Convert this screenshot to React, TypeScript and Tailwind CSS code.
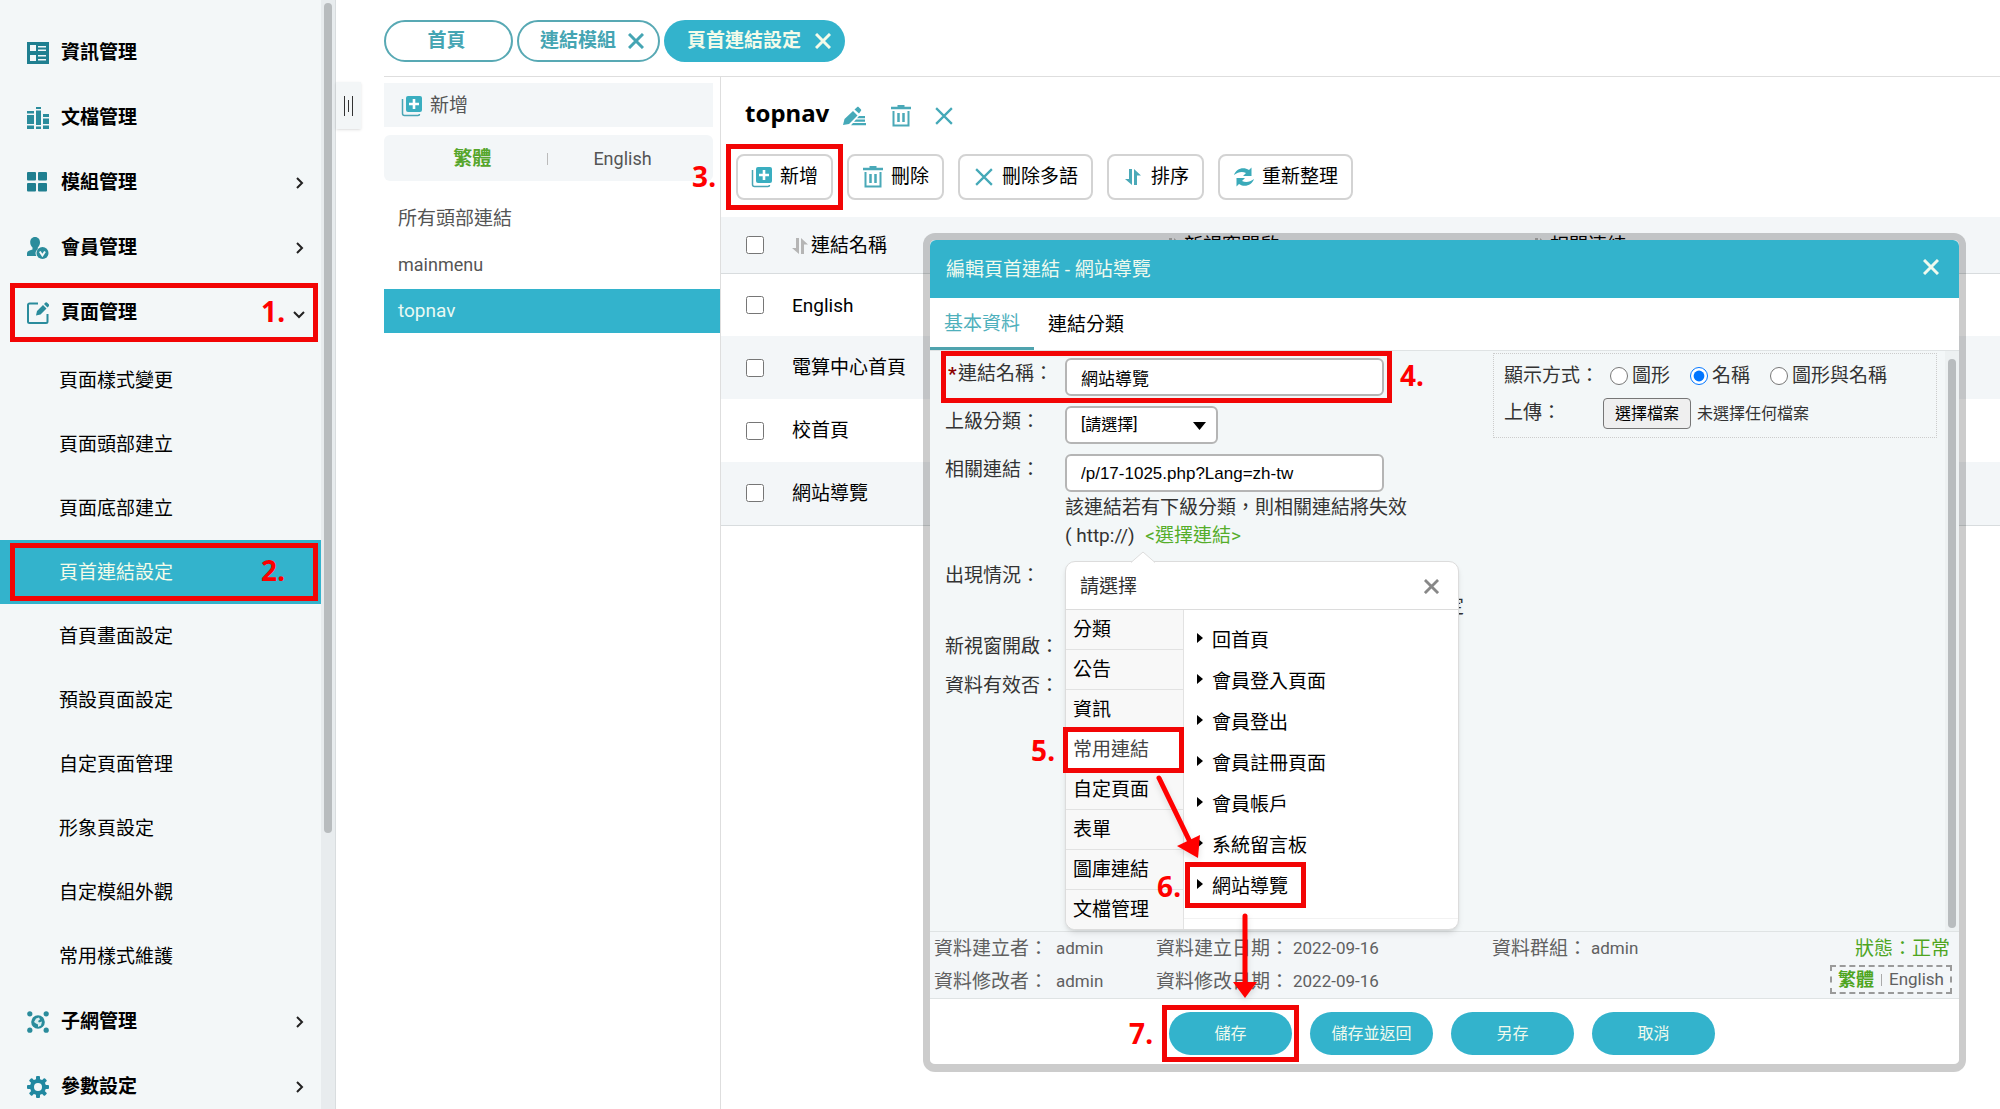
import { useRef } from "react";
import type { ReactNode } from "react";

const subItems = [
  "頁面樣式變更",
  "頁面頭部建立",
  "頁面底部建立",
  "頁首連結設定",
  "首頁畫面設定",
  "預設頁面設定",
  "自定頁面管理",
  "形象頁設定",
  "自定模組外觀",
  "常用樣式維護",
];

const rows = ["English", "電算中心首頁", "校首頁", "網站導覽"];

const linkGroups = ["分類", "公告", "資訊", "常用連結", "自定頁面", "表單", "圖庫連結", "文檔管理"];

const commonLinks = ["回首頁", "會員登入頁面", "會員登出", "會員註冊頁面", "會員帳戶", "系統留言板", "網站導覽"];

/* ---------- icons ---------- */

function InfoIcon() {
  return (
    <svg width="22" height="22" viewBox="0 0 22 22" fill="#1f7f90">
      <path fillRule="evenodd" d="M0 0h22v22H0zM3 3v6h6V3zM3 13v6h6v-6zM11 4v1.5h8V4zM11 7.5V9h8V7.5zM11 13v1.5h8V13zM11 17v1.5h8V17z" />
    </svg>
  );
}

function BooksIcon() {
  return (
    <svg width="22" height="22" viewBox="0 0 22 22" fill="#2a8c9c">
      <path d="M0 4h7v2.5H0zM0 8h7v9H0zM0 18.5h7V22H0zM9 0h5v2H9zM9 3.5h5V18H9zM9 19.5h5V22H9zM16 7h6v3h-6zM16 11.5h6V17h-6zM16 18.5h6V22h-6z" />
    </svg>
  );
}

function GridIcon() {
  return (
    <svg width="22" height="22" viewBox="0 0 22 22" fill="#1f7f90">
      <rect x="0" y="0" width="9" height="8.5" rx="1" />
      <rect x="11" y="0" width="9" height="8.5" rx="1" />
      <rect x="0" y="11" width="9" height="8.5" rx="1" />
      <rect x="11" y="11" width="9" height="8.5" rx="1" />
    </svg>
  );
}

function MemberIcon() {
  return (
    <svg width="22" height="22" viewBox="0 0 22 22" fill="#2a8c9c">
      <path d="M8 0c3.200 0 5 2.300 5 5.200 0 2.300-1 4.200-2.200 5.200v1.800C9 13.500 8.300 15 8.600 17c.1.800.4 1.500.8 2H0v-2.500c0-1.500 1-2.300 2.500-2.900l3-1.200v-2C4.200 9.300 3.200 7.500 3.200 5.200 3.200 2.300 4.900 0 8 0z" />
      <circle cx="15.500" cy="16" r="6" />
      <path d="M12.800 14.500l2.600 4 2.600-4" fill="none" stroke="#f3f7f8" strokeWidth="2" />
    </svg>
  );
}

function PageIcon() {
  return (
    <svg width="22" height="22" viewBox="0 0 22 22" fill="#2a8c9c">
      <path d="M11 1.500H2.500a1.500 1.500 0 0 0-1.500 1.500v16.500a1.500 1.500 0 0 0 1.500 1.500H19a1.500 1.500 0 0 0 1.500-1.500V12" fill="none" stroke="#2a8c9c" strokeWidth="2" />
      <path d="M9 13.500l1-4.500 6-6 3.500 3.500-6 6zM17 2l1.500-1.500a1 1 0 0 1 1.400 0L22 2.600a1 1 0 0 1 0 1.400l-1.500 1.500z" />
    </svg>
  );
}

function SubnetIcon() {
  return (
    <svg width="22" height="22" viewBox="0 0 22 22" fill="#2a8c9c">
      <circle cx="2.800" cy="2.800" r="2.600" />
      <circle cx="19.200" cy="2.800" r="2.600" />
      <circle cx="2.800" cy="19.200" r="2.600" />
      <circle cx="19.200" cy="19.200" r="2.600" />
      <circle cx="11" cy="11" r="6.800" />
      <path d="M7 11l2-3.500 3-1 1 2-2 1.500 1 1.500 3-1-1 4-3 1.500v-2.500l-2-1z" fill="#d9eef0" />
    </svg>
  );
}

function GearIcon() {
  return (
    <svg width="22" height="22" viewBox="0 0 22 22">
      <g fill="#2188a0">
        <rect x="9" y="0" width="4" height="22" rx="1" />
        <rect x="9" y="0" width="4" height="22" rx="1" transform="rotate(45 11 11)" />
        <rect x="9" y="0" width="4" height="22" rx="1" transform="rotate(90 11 11)" />
        <rect x="9" y="0" width="4" height="22" rx="1" transform="rotate(135 11 11)" />
        <circle cx="11" cy="11" r="8" />
      </g>
      <circle cx="11" cy="11" r="4" fill="#f3f7f8" />
    </svg>
  );
}

function Chevron({ down = false }: { down?: boolean }) {
  return (
    <svg width="12" height="12" viewBox="0 0 12 12" fill="none" stroke="#222" strokeWidth="2">
      {down ? <path d="M1 5l5 5 5-5" /> : <path d="M4 1l5 5-5 5" />}
    </svg>
  );
}

function CrossIcon({ size = 16, width = 3 }: { size?: number; width?: number }) {
  return (
    <svg width={size} height={size} viewBox="0 0 16 16" fill="none" stroke="currentColor" strokeWidth={width}>
      <path d="M1 1l14 14M15 1L1 15" />
    </svg>
  );
}

function AddIcon() {
  return (
    <svg width="22" height="22" viewBox="0 0 22 22">
      <rect x="5" y="1" width="16" height="16" rx="2" fill="#3aaec0" />
      <path d="M13 4v10M8 9h10" stroke="#fff" strokeWidth="2.600" />
      <path d="M1.500 4v14.500a2 2 0 0 0 2 2H17c1 0 1.500-.5 1.500-1.500" fill="none" stroke="#4aa5b5" strokeWidth="1.500" />
    </svg>
  );
}

function TrashIcon() {
  return (
    <svg width="20" height="22" viewBox="0 0 20 22" fill="none" stroke="#4aa9b8">
      <path d="M0 3h20" strokeWidth="2.500" />
      <path d="M6.500 1h7" strokeWidth="2" />
      <path d="M2.500 6v14.500h15V6" strokeWidth="2" />
      <path d="M7.500 8v9M12.500 8v9" strokeWidth="2.500" />
    </svg>
  );
}

function PencilIcon() {
  return (
    <svg width="24" height="20" viewBox="0 0 24 20" fill="#45a9b8">
      <path d="M0 19l1.500-6L10 5l4.500 4.500L6 18zM11.500 3.500L14 1.200c.6-.6 1.200-.6 1.800 0l2 2c.6.600.6 1.200 0 1.800L16 7.500z" />
      <path d="M16 10h6v2.200h-8zM13 13.500h9v2.200H11zM10 17h13v2.200H8z" />
    </svg>
  );
}

function SortIcon({ color = "#4aa9b8" }: { color?: string }) {
  return (
    <svg width="16" height="18" viewBox="0 0 16 18" fill={color}>
      <path d="M4 1h3v16L0 11h4zM9 17V1l7 6.500h-4V17z" />
    </svg>
  );
}

function RefreshIcon() {
  return (
    <svg width="22" height="20" viewBox="0 0 22 20" fill="#3aaab9">
      <path d="M1 8C3 2 10-1 16 3l2.500-2.500V9H10l3-3C9 4 5 5 1 8z" />
      <path d="M21 12c-2 6-9 9-15 5l-2.500 2.500V11H12l-3 3c4 2 8 1 12-2z" />
    </svg>
  );
}

/* ---------- numbered steps ---------- */

function StepBox({ className }: { className: string }) {
  return <span className={`pointer-events-none absolute z-10 border-[5px] border-[#f20505] ${className}`} />;
}

function StepNumber({ n, className }: { n: number; className: string }) {
  return (
    <span className={`pointer-events-none absolute z-10 font-['Noto_Sans',sans-serif] text-[28px] leading-7 font-bold text-[#ff0000] ${className}`}>
      {n}.
    </span>
  );
}

/* ---------- sidebar ---------- */

function MenuItem({ icon, label, arrow, children }: { icon: ReactNode; label: string; arrow?: "right" | "down"; children?: ReactNode }) {
  return (
    <li className="relative">
      <a href="#" className="flex h-[65px] items-center pr-4 pl-[27px] font-bold text-black">
        {icon}
        <span className="ml-3 flex-1 pt-0.5">{label}</span>
        {arrow && <Chevron down={arrow === "down"} />}
      </a>
      {children}
    </li>
  );
}

function Sidebar() {
  return (
    <aside className="flex w-[336px] shrink-0 overflow-hidden border-r border-[#d9dddf] bg-[#f3f7f8]">
      <nav className="flex-1 pt-5">
        <ul>
          <MenuItem icon={<InfoIcon />} label="資訊管理" />
          <MenuItem icon={<BooksIcon />} label="文檔管理" />
          <MenuItem icon={<GridIcon />} label="模組管理" arrow="right" />
          <MenuItem icon={<MemberIcon />} label="會員管理" arrow="right" />
          <MenuItem icon={<PageIcon />} label="頁面管理" arrow="down">
            <StepBox className="top-[3px] right-[3px] left-[10px] h-[59px]" />
            <StepNumber n={1} className="top-[17px] right-9" />
            <ul className="pt-[3px] pb-px">
              {subItems.map((item) =>
                item === "頁首連結設定" ? (
                  <li key={item} className="relative">
                    <a href="#" className="flex h-16 items-center bg-[#33b3cc] pt-0.5 pl-[59px] text-[#f4fbe9]">{item}</a>
                    <StepBox className="inset-y-[3px] right-[3px] left-[10px]" />
                    <StepNumber n={2} className="top-4 right-9" />
                  </li>
                ) : (
                  <li key={item}>
                    <a href="#" className="flex h-16 items-center pt-0.5 pl-[59px] text-black">{item}</a>
                  </li>
                )
              )}
            </ul>
          </MenuItem>
          <MenuItem icon={<SubnetIcon />} label="子網管理" arrow="right" />
          <MenuItem icon={<GearIcon />} label="參數設定" arrow="right" />
        </ul>
      </nav>
      <div className="w-[14px] bg-[#e8ecee] px-[3px] pt-[3px]">
        <div className="h-3/4 rounded-full bg-[#b8bcbe]" />
      </div>
    </aside>
  );
}

/* ---------- page ---------- */

function Tabs() {
  return (
    <div className="flex gap-1 border-b border-[#dedede] pt-5 pb-[14px] font-bold">
      <button className="h-[42px] w-[129px] rounded-full border-2 border-[#58a9b4] pr-1 text-[#45a5b3]">首頁</button>
      <button className="flex h-[42px] items-center gap-3 rounded-full border-2 border-[#58a9b4] pr-[14px] pl-[21px] text-[#45a5b3]">
        連結模組 <CrossIcon />
      </button>
      <button className="flex h-[42px] items-center gap-[14px] rounded-full bg-[#33b3cc] pr-[14px] pl-[23px] text-[#f4fbe9]">
        頁首連結設定 <CrossIcon />
      </button>
    </div>
  );
}

function CategoryPanel() {
  return (
    <section className="w-[337px] shrink-0 border-r border-[#dedede] pt-[6px] text-[#555]">
      <button className="mr-[7px] flex h-11 w-[329px] items-center gap-[7px] bg-[#f3f6f8] pt-0.5 pl-[17px]">
        <AddIcon /> 新增
      </button>
      <div className="mt-2 mr-[7px] flex h-[46px] items-center justify-center rounded-md bg-[#f3f6f8] pt-0.5 pl-2">
        <a href="#" className="font-bold text-[#55a52a]">繁體</a>
        <span className="mr-[45px] ml-14 h-3 w-px bg-[#bbb]" />
        <a href="#" className="text-lg">English</a>
      </div>
      <ul className="mt-4 space-y-0.5">
        <li><a href="#" className="flex h-11 items-center pl-[14px]">所有頭部連結</a></li>
        <li><a href="#" className="flex h-11 items-center pl-[14px] text-lg">mainmenu</a></li>
        <li><a href="#" className="flex h-11 items-center bg-[#33b3cc] pl-[14px] text-[#e9f9f3]">topnav</a></li>
      </ul>
    </section>
  );
}

function ToolButton({ icon, children }: { icon: ReactNode; children: ReactNode }) {
  return (
    <button className="flex h-[46px] items-center rounded-lg border-2 border-[#d3d3d3] bg-white px-[13px] text-black">
      <span className="mr-[7px] flex w-[22px] justify-center text-[#45a9b8]">{icon}</span>
      {children}
    </button>
  );
}

function Content() {
  return (
    <section className="min-w-0 flex-1">
      <div className="flex h-[77px] items-center pl-6 text-[#45a9b8]">
        <h1 className="pb-[6px] font-['Noto_Sans',sans-serif] text-2xl font-bold text-black">topnav</h1>
        <button aria-label="編輯" className="ml-[14px]"><PencilIcon /></button>
        <button aria-label="刪除" className="ml-6"><TrashIcon /></button>
        <button aria-label="關閉" className="ml-6"><CrossIcon size={18} width={2} /></button>
      </div>
      <div className="flex gap-[14px] pl-[15px]">
        <div className="relative">
          <ToolButton icon={<AddIcon />}>新增</ToolButton>
          <StepBox className="-inset-[10px]" />
          <StepNumber n={3} className="top-2 right-full mr-5" />
        </div>
        <ToolButton icon={<TrashIcon />}>刪除</ToolButton>
        <ToolButton icon={<CrossIcon size={18} width={2} />}>刪除多語</ToolButton>
        <ToolButton icon={<SortIcon />}>排序</ToolButton>
        <ToolButton icon={<RefreshIcon />}>重新整理</ToolButton>
      </div>
      <table className="mt-[17px] w-full table-fixed text-left text-black">
        <colgroup>
          <col className="w-[71px]" />
          <col className="w-[373px]" />
          <col className="w-[366px]" />
          <col />
        </colgroup>
        <thead>
          <tr className="h-14 border-b border-[#d8dcde] bg-[#f3f6f8]">
            <th className="pl-[25px]">
              <input type="checkbox" aria-label="全選" className="block size-[18px]" />
            </th>
            {["連結名稱", "新視窗開啟", "相關連結"].map((h) => (
              <th key={h} className="font-normal">
                <span className="flex items-center gap-[3px] pt-0.5"><SortIcon color="#b5b5b5" />{h}</span>
              </th>
            ))}
          </tr>
        </thead>
        <tbody className="border-b border-[#d8dcde]">
          {rows.map((r) => (
            <tr key={r} className="h-[63px] even:bg-[#f3f6f8]">
              <td className="pl-[25px]">
                <input type="checkbox" aria-label={r} className="block size-[18px]" />
              </td>
              <td className="pt-0.5">{r}</td>
              <td />
              <td />
            </tr>
          ))}
        </tbody>
      </table>
    </section>
  );
}

/* ---------- dialog ---------- */

function LinkPicker() {
  return (
    <div className="absolute top-full left-0 z-20 mt-[11px] w-[394px] rounded-[10px] border border-[#dcdcdc] bg-white text-black shadow-md">
      <svg className="absolute -top-[11px] left-[65px]" width="24" height="12" viewBox="0 0 24 12">
        <path d="M0 11.500L12 1l12 10.500" fill="#fff" stroke="#dcdcdc" />
      </svg>
      <div className="flex h-12 items-center justify-between border-b border-[#dcdcdc] pt-0.5 pr-[19px] pl-[14px]">
        <span className="text-[#333]">請選擇</span>
        <button aria-label="關閉選單" className="text-[#888]"><CrossIcon size={15} /></button>
      </div>
      <div className="flex">
        <ul className="w-[118px] rounded-bl-[10px] border-r border-[#e2e2e2] bg-[#f8f8f8]">
          {linkGroups.map((g) =>
            g === "常用連結" ? (
              <li key={g} className="relative">
                <a href="#" className="flex h-10 items-center bg-white pl-[7px] text-[#444]">{g}</a>
                <StepBox className="-inset-y-[3px] -right-px -left-[3px]" />
                <StepNumber n={5} className="top-[6px] right-full mr-[11px]" />
              </li>
            ) : (
              <li key={g} className="border-b border-[#e2e2e2] last:border-0">
                <a href="#" className="flex h-[39px] items-center pl-[7px]">{g}</a>
              </li>
            )
          )}
        </ul>
        <ul className="mb-[10px] flex-1 border-b border-[#f2f2f2] pt-[10px] pl-[13px]">
          {commonLinks.map((l) => (
            <li key={l} className="relative">
              <a href="#" className="flex h-[41px] items-center gap-[9px]">
                <svg width="6" height="16" viewBox="0 0 6 16"><path d="M0 0l6 5-6 5z" fill="#000" /></svg>
                {l}
              </a>
              {l === "網站導覽" && (
                <>
                  <StepBox className="-top-1 -left-3 h-[46px] w-[121px]" />
                  <StepNumber n={6} className="top-[6px] right-full mr-4" />
                </>
              )}
            </li>
          ))}
        </ul>
      </div>
      <svg className="pointer-events-none absolute top-[208px] left-[85px] z-20 drop-shadow-md" width="110" height="230" viewBox="0 0 110 230">
        <g fill="#ff0000" stroke="#ff0000">
          <path d="M8 8l32 66" strokeWidth="5" strokeLinecap="round" />
          <path d="M26 76l23-11-2 23z" stroke="none" />
          <path d="M94 146v68" strokeWidth="5" strokeLinecap="round" />
          <path d="M82 212h24l-12 16z" stroke="none" />
        </g>
      </svg>
    </div>
  );
}

function Field({ label, id, children, className = "" }: { label: ReactNode; id?: string; children?: ReactNode; className?: string }) {
  return (
    <div className={`relative flex ${className}`}>
      <label htmlFor={id} className="w-[120px] shrink-0 pt-0.5 leading-7 whitespace-nowrap">{label}</label>
      {children}
    </div>
  );
}

function DisplayOptions() {
  const fileInput = useRef<HTMLInputElement>(null);

  return (
    <div className="mt-0.5 mr-2 w-[444px] shrink-0 self-start border border-dotted border-[#ccc] pt-2 pb-2 pl-[10px]">
      <div className="flex items-center leading-7">
        <span className="w-[106px]">顯示方式：</span>
        {["圖形", "名稱", "圖形與名稱"].map((o) => (
          <label key={o} className="mr-5 flex items-center gap-1">
            <input type="radio" name="display" defaultChecked={o === "名稱"} className="size-[18px]" />
            {o}
          </label>
        ))}
      </div>
      <div className="mt-2 flex items-center">
        <label htmlFor="upload" className="w-[99px]">上傳：</label>
        <input ref={fileInput} id="upload" type="file" className="sr-only" />
        <button
          type="button"
          onClick={() => fileInput.current?.click()}
          className="h-[31px] rounded-sm border border-[#767676] bg-[#efefef] px-[11px] text-base text-black"
        >
          選擇檔案
        </button>
        <span className="ml-[6px] text-base">未選擇任何檔案</span>
      </div>
    </div>
  );
}

function RecordInfo() {
  return (
    <div className="flex border-y border-[#dfe3e4] bg-[#f3f6f8] pr-[7px] pl-1 text-[#606060]">
      <dl className="grid flex-1 grid-cols-[222px_336px_1fr] leading-[33px]">
        <div className="flex">
          <dt>資料建立者：</dt>
          <dd className="ml-2 text-[17px]">admin</dd>
        </div>
        <div className="flex">
          <dt>資料建立日期：</dt>
          <dd className="ml-1 text-[17px]">2022-09-16</dd>
        </div>
        <div className="flex">
          <dt>資料群組：</dt>
          <dd className="ml-1 text-[17px]">admin</dd>
        </div>
        <div className="flex">
          <dt>資料修改者：</dt>
          <dd className="ml-2 text-[17px]">admin</dd>
        </div>
        <div className="flex">
          <dt>資料修改日期：</dt>
          <dd className="ml-1 text-[17px]">2022-09-16</dd>
        </div>
      </dl>
      <div className="flex flex-col items-end">
        <span className="pr-0.5 leading-[33px] text-[#4ea51f]">狀態：正常</span>
        <div className="flex h-[29px] items-center gap-[7px] border-2 border-dashed border-[#9a9a9a] px-[6px]">
          <a href="#" className="text-lg font-bold text-[#4ea51f]">繁體</a>
          <span className="h-3 w-px bg-[#aaa]" />
          <a href="#" className="text-[17px]">English</a>
        </div>
      </div>
    </div>
  );
}

function EditDialog() {
  return (
    <div
      role="dialog"
      aria-label="編輯頁首連結"
      className="absolute top-[233px] right-[34px] left-[923px] z-30 rounded-xl border-[7px] border-b-8 border-black/20 bg-white bg-clip-padding"
    >
      <header className="flex h-[58px] items-center justify-between rounded-t-md bg-[#33b3cc] pr-5 pl-4 text-[#f0faee]">
        <h2 className="pt-0.5">編輯頁首連結 - 網站導覽</h2>
        <button aria-label="關閉" className="pb-1"><CrossIcon /></button>
      </header>
      <div className="flex h-[53px] border-b border-[#dfe3e4] text-black">
        <button className="border-b-3 border-[#4fa3ae] px-[14px] pt-[3px] text-[#4fb0bc]">基本資料</button>
        <button className="px-[14px] pt-0.5">連結分類</button>
      </div>
      <div className="flex bg-[#f3f7f8] text-[#333]">
        <form className="flex flex-1 flex-col gap-[10px] pt-[7px] pb-[231px] pl-[15px]">
          <Field id="name" label={<span className="flex items-center"><b className="w-[13px] pl-[3px] text-[#8b0000]">*</b>連結名稱：</span>}>
            <input id="name" defaultValue="網站導覽" className="h-[38px] w-[319px] rounded-md border-2 border-[#b5b5b5] bg-white px-[14px] font-['Liberation_Sans','Noto_Sans_CJK_TC',sans-serif] text-[17px] text-black" />
            <StepBox className="-top-[7px] -left-1 h-[52px] w-[451px]" />
            <StepNumber n={4} className="top-[3px] left-[455px]" />
          </Field>
          <Field id="parent" label="上級分類：">
            <div className="relative">
              <select id="parent" className="h-[38px] w-[153px] appearance-none rounded-md border-2 border-[#b5b5b5] bg-white px-[14px] text-base text-black">
                <option>[請選擇]</option>
              </select>
              <svg className="pointer-events-none absolute top-4 right-3" width="13" height="8" viewBox="0 0 13 8">
                <path d="M0 0h13L6.500 8z" fill="#000" />
              </svg>
            </div>
          </Field>
          <Field id="url" label="相關連結：">
            <div>
              <input id="url" defaultValue="/p/17-1025.php?Lang=zh-tw" className="block h-[38px] w-[319px] rounded-md border-2 border-[#b5b5b5] bg-white px-[14px] pt-0.5 font-['Liberation_Sans',sans-serif] text-[17px] text-black" />
              <p className="mt-0.5 leading-7">該連結若有下級分類，則相關連結將失效</p>
              <div className="relative leading-7">
                ( http://) <a href="#" className="ml-1.5 text-[#55ad2a]">&lt;選擇連結&gt;</a>
                <LinkPicker />
              </div>
            </div>
          </Field>
          <Field label="出現情況：" className="h-[61px]">
            <span className="ml-[380px] self-end">定</span>
          </Field>
          <Field label="新視窗開啟：" />
          <Field label="資料有效否：" className="-mt-px" />
        </form>
        <DisplayOptions />
        <div className="w-[14px] bg-[#edf1f2] px-[3px] pt-2 pb-[3px]">
          <div className="h-full rounded-full bg-[#b8bcbe]" />
        </div>
      </div>
      <RecordInfo />
      <footer className="flex justify-center gap-[18px] pt-[13px] pr-[5px] pb-[9px]">
        <div className="relative">
          <button className="h-[43px] w-[123px] rounded-full bg-[#33b3cc] text-base text-[#f0faee]">儲存</button>
          <StepBox className="-inset-[7px]" />
          <StepNumber n={7} className="top-[7px] right-full mr-4" />
        </div>
        {["儲存並返回", "另存", "取消"].map((b) => (
          <button key={b} className="h-[43px] w-[123px] rounded-full bg-[#33b3cc] text-base text-[#f0faee]">{b}</button>
        ))}
      </footer>
    </div>
  );
}

export default function App() {
  return (
    <div className="relative flex h-screen overflow-hidden bg-white font-[Roboto,'Noto_Sans_CJK_TC',sans-serif] text-[19px]">
      <Sidebar />
      <main className="relative flex min-w-0 flex-1 flex-col pl-12">
        <button aria-label="收合選單" className="absolute top-[82px] left-0 flex h-[47px] w-[25px] items-center justify-center gap-[3px] bg-[#f3f6f7] shadow">
          <span className="h-5 w-px bg-[#333]" />
          <span className="h-3 w-px bg-[#333]" />
          <span className="h-5 w-px bg-[#333]" />
        </button>
        <Tabs />
        <div className="flex flex-1">
          <CategoryPanel />
          <Content />
        </div>
      </main>
      <EditDialog />
    </div>
  );
}
